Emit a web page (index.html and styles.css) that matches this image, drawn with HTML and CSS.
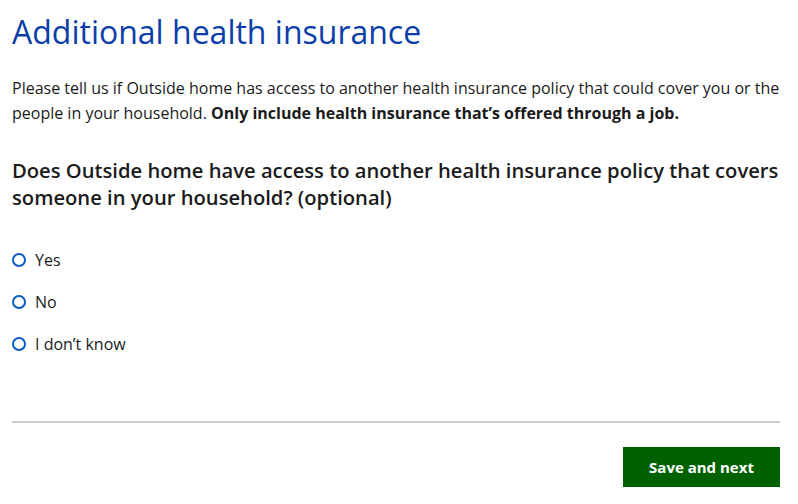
FILE: index.html
```html
<!DOCTYPE html>
<html lang="en">
<head>
<meta charset="utf-8">
<title>Additional health insurance</title>
<link rel="stylesheet" href="styles.css">
</head>
<body>
<main class="page">
  <h1 class="title">Additional health insurance</h1>
  <p class="intro">Please tell us if Outside home has access to another health insurance policy that could cover you or the people in your household. <strong>Only include health insurance that’s offered through a job.</strong></p>
  <fieldset class="question">
    <legend class="legend">Does Outside home have access to another health insurance policy that covers someone in your household? (optional)</legend>
    <div class="options">
      <label class="option"><input type="radio" name="ins" class="radio"><span>Yes</span></label>
      <label class="option"><input type="radio" name="ins" class="radio"><span>No</span></label>
      <label class="option"><input type="radio" name="ins" class="radio"><span>I don’t know</span></label>
    </div>
  </fieldset>
  <div class="footer">
    <button class="btn" type="button">Save and next</button>
  </div>
</main>
</body>
</html>
```
FILE: styles.css
```css
html, body {
  margin: 0;
  padding: 0;
  background: #fff;
}
body {
  font-family: "Open Sans", "Noto Sans", sans-serif;
  color: #1b1b1b;
}
.page {
  width: 768px;
  padding: 0 12px;
}
.title {
  margin: 10px 0 0;
  font-size: 32px;
  line-height: 44px;
  font-weight: 400;
  color: #0b3ea8;
}
.intro {
  margin: 22px 0 0;
  font-size: 16px;
  line-height: 25px;
  color: #1b1b1b;
}
.intro strong {
  font-weight: 700;
}
.question {
  border: 0;
  margin: 31px 0 0;
  padding: 0;
  min-width: 0;
}
.legend {
  padding: 0;
  font-size: 20.2px;
  line-height: 27px;
  font-weight: 600;
  color: #1b1b1b;
}
.options {
  display: flex;
  flex-direction: column;
  gap: 16px;
  margin-top: 36px;
}
.option {
  display: flex;
  align-items: center;
  gap: 9px;
  height: 26px;
  font-size: 16px;
  color: #1b1b1b;
}
.radio {
  appearance: none;
  margin: 0;
  width: 14px;
  height: 14px;
  border: 2px solid #0b5bc4;
  border-radius: 50%;
  box-sizing: border-box;
}
.footer {
  margin-top: 64px;
  border-top: 2px solid #cccccc;
  padding-top: 24px;
  display: flex;
  justify-content: flex-end;
}
.btn {
  width: 157px;
  height: 40px;
  border: 0;
  background: #006100;
  color: #fff;
  font-family: "Open Sans", sans-serif;
  font-weight: 700;
  font-size: 15px;
}
```
